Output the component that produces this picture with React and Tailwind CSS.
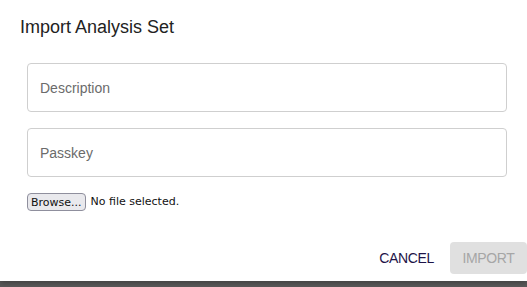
export default function App() {
  return (
    <div className="w-[527px] h-[287px] overflow-hidden bg-[#5a5a5a] font-['Liberation_Sans',Arial,sans-serif]">
      <div className="h-[281px] bg-white flex flex-col shadow-[0_2px_6px_rgba(0,0,0,0.3)]">
        {/* Title */}
        <h2 className="pl-5 pt-[15px] text-[18px] leading-[24px] text-[#222]">
          Import Analysis Set
        </h2>

        {/* Fields */}
        <div className="pl-[27px] pr-5 pt-[24px] flex flex-col gap-4">
          <input
            type="text"
            placeholder="Description"
            className="h-[49px] w-full rounded border border-[#cfcfcf] px-3 text-[14px] text-[#333] placeholder:text-[#6b6b6b] outline-none"
          />
          <input
            type="text"
            placeholder="Passkey"
            className="h-[49px] w-full rounded border border-[#cfcfcf] px-3 text-[14px] text-[#333] placeholder:text-[#6b6b6b] outline-none"
          />
          <div className="flex items-center gap-[5px] font-['DejaVu_Sans',sans-serif] text-[11px] text-[#111]">
            <button className="h-[18px] px-[3px] rounded-[4px] border border-[#8f8f9d] bg-[#e9e9ed] leading-none">
              Browse...
            </button>
            <span>No file selected.</span>
          </div>
        </div>

        {/* Actions */}
        <div className="mt-auto mb-[7px] flex items-center justify-end gap-4">
          <button className="text-[14px] text-[#1e1448] tracking-tight">CANCEL</button>
          <button
            disabled
            className="h-[32px] w-[77px] rounded bg-[#e0e0e0] text-[14px] text-[#a6a6a6] tracking-tight"
          >
            IMPORT
          </button>
        </div>
      </div>
    </div>
  )
}
